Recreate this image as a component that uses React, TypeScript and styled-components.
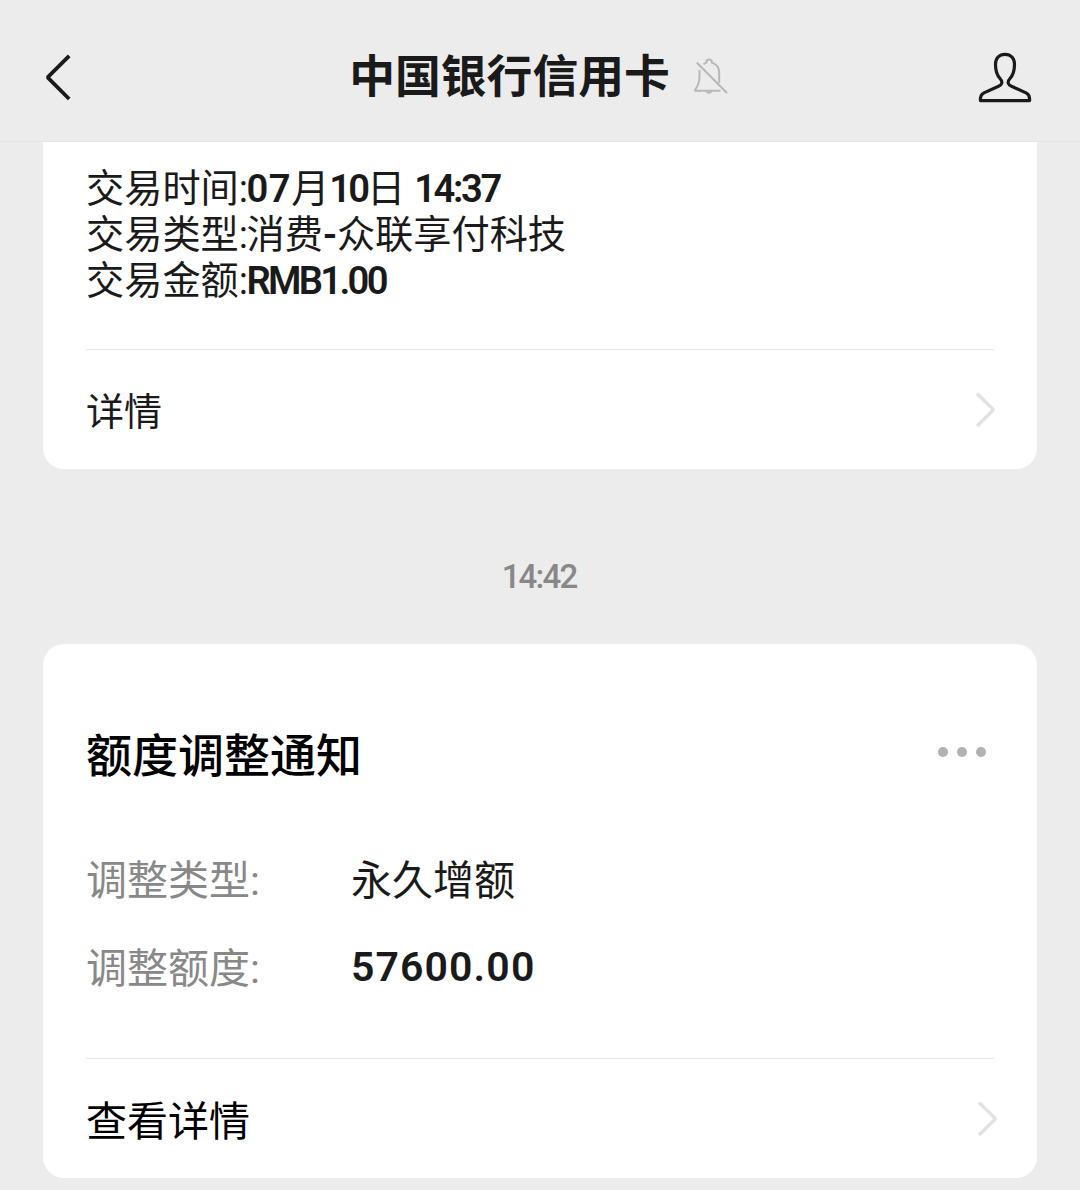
import React from "react";
import styled, { createGlobalStyle } from "styled-components";

const Global = createGlobalStyle`
  * { box-sizing: border-box; }
  body { margin: 0; background: #ececec; }
`;

const Page = styled.div`
  display: flex;
  flex-direction: column;
  width: 1080px;
  height: 1190px;
  overflow: hidden;
  background: #ececec;
  color: #1a1a1a;
  font-family: "Noto Sans CJK SC", "Noto Sans", sans-serif;
`;

const NavBar = styled.header`
  display: grid;
  grid-template-columns: 1fr auto 1fr;
  align-items: center;
  flex: none;
  height: 142px;
  padding: 13px 48px 0 43px;
  border-bottom: 1px solid #e4e4e4;
`;

const NavTitle = styled.div`
  display: flex;
  align-items: center;
  margin-left: 2px;
  padding-bottom: 9px;
  gap: 22px;

  svg {
    margin-top: 7px;
  }
`;

const TitleText = styled.h1`
  margin: 0;
  font-size: 45.8px;
  line-height: 60px;
  font-weight: 700;
`;

const NavButton = styled.button<{ $end?: boolean }>`
  display: flex;
  justify-self: ${(p) => (p.$end ? "end" : "start")};
  padding: ${(p) => (p.$end ? "2px 0 0" : "0")};
  border: 0;
  background: none;
`;

const Card = styled.section<{ $clipped?: boolean; $height: number }>`
  display: flex;
  flex-direction: column;
  flex: none;
  height: ${(p) => p.$height}px;
  margin: 0 43px;
  padding: 0 43px;
  background: #fff;
  border-radius: ${(p) => (p.$clipped ? "0 0 21px 21px" : "21px")};
`;

const Summary = styled.div`
  height: 207px;
  padding-top: 24px;
  font-family: Roboto, "Noto Sans CJK SC", sans-serif;
  font-size: 38.2px;
  line-height: 46px;
  white-space: pre;
`;

const SummaryLine = styled.div`
  height: 46px;
`;

const Latin = styled.span<{ $spacing?: number; $lead?: number }>`
  margin-left: ${(p) => p.$lead ?? 0}px;
  font-family: Roboto, "Liberation Sans", sans-serif;
  font-weight: 600;
  letter-spacing: ${(p) => p.$spacing ?? 0}px;
`;

const Colon = styled.span`
  font-family: Roboto, "Liberation Sans", sans-serif;
  letter-spacing: -1.5px;
`;

const LinkRow = styled.a<{ $size: number; $color: string; $nudge: number }>`
  display: flex;
  align-items: center;
  justify-content: space-between;
  flex: 1;
  border-top: 1px solid #e5e5e5;
  color: ${(p) => p.$color};
  font-size: ${(p) => p.$size}px;
  line-height: 60px;

  svg {
    margin-right: -${(p) => p.$nudge}px;
  }
`;

const LinkLabel = styled.span`
  padding-bottom: 2px;
`;

const TimeStamp = styled.time`
  display: block;
  flex: none;
  height: 175px;
  padding-top: 88px;
  padding-right: 2px;
  text-align: center;
  color: #888;
  font-family: Roboto, "Liberation Sans", sans-serif;
  font-size: 33px;
  line-height: 40px;
  font-weight: 500;
  letter-spacing: -1.8px;
`;

const CardHeader = styled.div`
  display: flex;
  justify-content: space-between;
  align-items: center;
  height: 60px;
  margin-top: 79px;
  padding-right: 8px;
`;

const CardTitle = styled.h2`
  margin: 0;
  padding-bottom: 3px;
  color: #000;
  font-size: 46px;
  line-height: 60px;
  font-weight: 500;
`;

const Dots = styled.div`
  display: flex;
  gap: 9.4px;
  padding-bottom: 2px;
`;

const Dot = styled.i`
  width: 9.8px;
  height: 9.8px;
  border-radius: 50%;
  background: #b2b2b2;
`;

const Fields = styled.dl`
  display: grid;
  grid-template-columns: 265px 1fr;
  grid-auto-rows: 88px;
  align-content: start;
  align-items: center;
  height: 275px;
  margin: 0;
  padding-top: 50px;
  font-size: 41px;
  line-height: 60px;
`;

const Label = styled.dt`
  padding-top: 3px;
  color: #888;
`;

const Value = styled.dd`
  margin: 0;
`;

const BackIcon = () => (
  <svg width="30" height="50" viewBox="43 52 30 50" fill="none" stroke="#1a1a1a" strokeWidth="3.8">
    <path d="M69.2 55.8 47.6 77.4 69.2 99" strokeLinejoin="bevel" />
  </svg>
);

const MutedBellIcon = () => (
  <svg width="36" height="40" viewBox="692 56 36 40" fill="none" stroke="#b8b8b8" strokeWidth="2">
    <path d="M699.5 70v6c0 6-1.3 10-4.3 13.6v1.2h25.3M703.5 64.2c1-.8 1.9-1.3 2.8-1.6 0-4 5.6-4 5.6 0 4.7 1.6 7.3 5 7.3 9.8v10.500" />
    <path d="M696.7 62.5 727 93M706.8 91.2c.6 2.2 3.8 2.2 4.4 0" />
  </svg>
);

const PersonIcon = () => (
  <svg width="54" height="52" viewBox="978 52 54 52" fill="none" stroke="#1a1a1a" strokeWidth="3.2" strokeLinejoin="round">
    <path d="M1005 54.3c-6 0-9.5 4.3-9.5 10.2 0 6.8 1.4 10.6 4.5 14 3.2 3.5 2 6.100-1.500 7.800l-14.500 6.600c-3 1.400-3.600 3-3.600 6v1.700h49.200v-1.700c0-3-.6-4.600-3.600-6l-14.500-6.600c-3.500-1.700-4.700-4.300-1.500-7.800 3.100-3.400 4.500-7.200 4.500-14 0-5.900-3.500-10.200-9.500-10.200Z" />
  </svg>
);

const ChevronIcon = () => (
  <svg width="22" height="38" viewBox="0 0 22 38" fill="none" stroke="#e2e2e2" strokeWidth="3.4">
    <path d="M3 2.500 19.500 18.800 3 35" strokeLinejoin="bevel" />
  </svg>
);

export default function App() {
  return (
    <Page>
      <Global />
      <NavBar>
        <NavButton aria-label="返回"><BackIcon /></NavButton>
        <NavTitle>
          <TitleText>中国银行信用卡</TitleText>
          <MutedBellIcon />
        </NavTitle>
        <NavButton $end aria-label="账号"><PersonIcon /></NavButton>
      </NavBar>

      <Card $clipped $height={327}>
        <Summary>
          <SummaryLine>
            交易时间<Colon>:</Colon><Latin $spacing={0.5}>07</Latin>月<Latin $spacing={-3}>10</Latin>日<Latin $lead={9} $spacing={-2.4}>14:37</Latin>
          </SummaryLine>
          <SummaryLine>
            交易类型<Colon>:</Colon>消费<Latin>-</Latin>众联享付科技
          </SummaryLine>
          <SummaryLine>
            交易金额<Colon>:</Colon><Latin $spacing={-2.7}>RMB1.00</Latin>
          </SummaryLine>
        </Summary>
        <LinkRow $size={38} $color="#1a1a1a" $nudge={2}>
          <LinkLabel>详情</LinkLabel><ChevronIcon />
        </LinkRow>
      </Card>

      <TimeStamp>14:42</TimeStamp>

      <Card $height={534}>
        <CardHeader>
          <CardTitle>额度调整通知</CardTitle>
          <Dots><Dot /><Dot /><Dot /></Dots>
        </CardHeader>
        <Fields>
          <Label>调整类型<Colon>:</Colon></Label>
          <Value>永久增额</Value>
          <Label>调整额度<Colon>:</Colon></Label>
          <Value><Latin $spacing={1.1}>57600.00</Latin></Value>
        </Fields>
        <LinkRow $size={41} $color="#000" $nudge={4}>
          <LinkLabel>查看详情</LinkLabel><ChevronIcon />
        </LinkRow>
      </Card>
    </Page>
  );
}
